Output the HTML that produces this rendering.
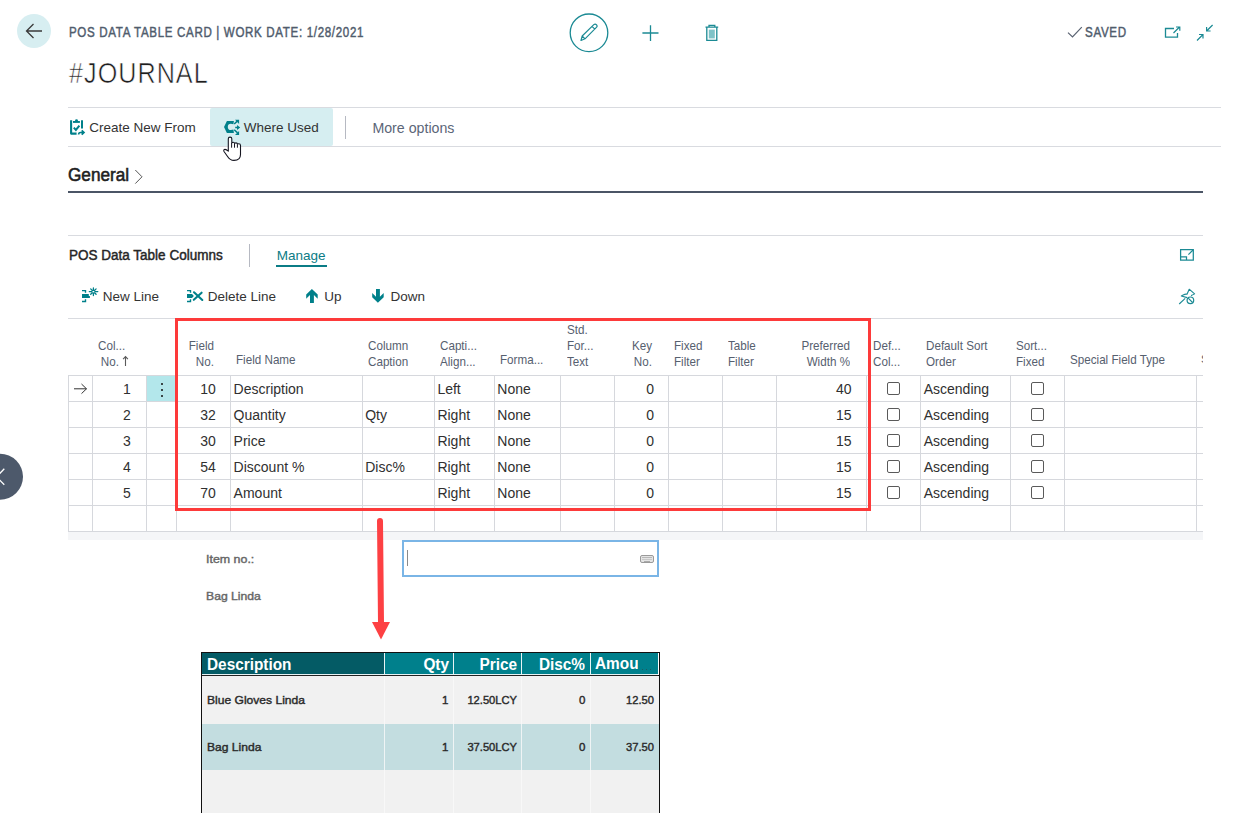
<!DOCTYPE html>
<html><head><meta charset="utf-8">
<style>
html,body{margin:0;padding:0;background:#fff;width:1234px;height:813px;overflow:hidden;position:relative;font-family:"Liberation Sans",sans-serif;}
.t{position:absolute;white-space:nowrap;}
.b{position:absolute;}
svg{position:absolute;overflow:visible;}
</style></head><body>

<div class="b" style="left:17px;top:14px;width:34px;height:34px;border-radius:50%;background:#d7eef1;"></div>
<svg style="left:0;top:0" width="1" height="1"><path d="M42 31 H27 M33.5 24 L26.5 31 L33.5 38" fill="none" stroke="#3a3a3a" stroke-width="1.3"/></svg>
<div class="t" style="left:68.80px;top:25.15px;font-size:14px;line-height:14px;color:#505c6d;font-weight:400;transform:scaleX(0.826);transform-origin:left center;letter-spacing:0.8px;-webkit-text-stroke:0.45px #505c6d;">POS DATA TABLE CARD | WORK DATE: 1/28/2021</div>
<div class="t" style="left:68.90px;top:58.41px;font-size:30px;line-height:30px;color:#1e1e1e;font-weight:400;transform:scaleX(0.84);transform-origin:left center;letter-spacing:1.2px;-webkit-text-stroke:0.6px #fff;">#JOURNAL</div>
<svg style="left:0;top:0" width="1" height="1"><circle cx="589" cy="32.8" r="18.8" fill="none" stroke="#1b8a94" stroke-width="1.3"/><path d="M581 40.5 L582.2 36 L593.8 24.6 Q595.2 23.4 596.6 24.8 Q597.8 26.2 596.4 27.4 L585 38.8 Z M582.2 36 L585 38.8 M592 26.4 L594.8 29.2" fill="none" stroke="#1b8a94" stroke-width="1.2" stroke-linejoin="round"/><path d="M642.4 33 H658.5 M650.5 25.2 V41" stroke="#1b8a94" stroke-width="1.3"/><path d="M705.5 27.2 H718.2 M709 27.2 V25.3 H714.8 V27.2 M706.8 27.2 V40.4 H716.8 V27.2" fill="none" stroke="#1b8a94" stroke-width="1.3"/><rect x="708.8" y="29.6" width="6" height="8.8" fill="#7fc3c8"/></svg>
<svg style="left:0;top:0" width="1" height="1"><path d="M1068 32.6 L1072.5 37 L1081.8 27.2" fill="none" stroke="#5a6372" stroke-width="1.2"/></svg>
<div class="t" style="left:1085.00px;top:25.15px;font-size:14px;line-height:14px;color:#505c6d;font-weight:400;transform:scaleX(0.829);transform-origin:left center;letter-spacing:0.8px;-webkit-text-stroke:0.45px #505c6d;">SAVED</div>
<svg style="left:0;top:0" width="1" height="1"><path d="M1174 28.5 H1165.5 V37.2 H1177.5 V33" fill="none" stroke="#1b8a94" stroke-width="1.3"/><path d="M1173.5 33 L1179.5 27 M1176 27 H1179.8 V30.8" fill="none" stroke="#1b8a94" stroke-width="1.2"/></svg>
<svg style="left:0;top:0" width="1" height="1"><path d="M1197 40.5 L1203 34.5 M1199 34.5 H1203 V38.5" fill="none" stroke="#1b8a94" stroke-width="1.2"/><path d="M1212.6 25 L1206.6 31 M1210.6 31 H1206.6 V27" fill="none" stroke="#1b8a94" stroke-width="1.2"/></svg>
<div class="b" style="left:68px;top:107px;width:1153px;height:1px;background:#d9dbe0;"></div>
<div class="b" style="left:68px;top:146px;width:1153px;height:1px;background:#d9dbe0;"></div>
<div class="b" style="left:210px;top:108px;width:123px;height:38px;background:#d6eef1;border-radius:2px;"></div>
<svg style="left:0;top:0" width="1" height="1"><path d="M71.1 120.2 V133.6 H76.6" fill="none" stroke="#00808a" stroke-width="2.1" stroke-linejoin="round"/><path d="M82 120.2 V128.6" fill="none" stroke="#00808a" stroke-width="2"/><rect x="73" y="121" width="6.9" height="1.9" fill="#00808a"/><circle cx="76.5" cy="120.6" r="1.4" fill="#00808a"/><path d="M73.8 127.6 L75.9 129.9 L79.4 125.6" fill="none" stroke="#00808a" stroke-width="2"/><path d="M78.6 134.6 Q78.6 132.5 80.6 132.5 H84.3 M81.7 130.3 L84 132.5 L81.7 134.7" fill="none" stroke="#00808a" stroke-width="1.7"/></svg>
<div class="t" style="left:89.20px;top:121.37px;font-size:13.5px;line-height:13.5px;color:#333333;font-weight:400;">Create New From</div>
<svg style="left:0;top:0" width="1" height="1"><path d="M224 126.9 L226.9 121 H233.9 L233.4 124.2 Q232.3 123.8 230.9 123.8 A3.1 3.1 0 0 0 230.9 130 Q232.3 130 233.4 129.6 L233.9 132.9 H226.9 Z" fill="#00808a"/><path d="M234.2 124 L237.6 120.9 M235.2 127.4 H238.2 M234.2 129.8 L237.6 132.9" fill="none" stroke="#00808a" stroke-width="1.5"/><path d="M235 119.8 H239.1 V123.9 Z M237 124.9 L240.2 127.4 L237 129.9 Z M235 135 H239.1 V130.9 Z" fill="#00808a"/></svg>
<div class="t" style="left:243.80px;top:121.37px;font-size:13.5px;line-height:13.5px;color:#333333;font-weight:400;">Where Used</div>
<div class="b" style="left:345px;top:116px;width:1px;height:23px;background:#b6b9c2;"></div>
<div class="t" style="left:372.40px;top:120.78px;font-size:14.2px;line-height:14.2px;color:#5b6678;font-weight:400;">More options</div>
<svg style="left:0;top:0" width="1" height="1"><path d="M228.3 151.2 V138.8 Q228.3 137.1 230.05 137.1 Q231.8 137.1 231.8 138.8 V142.9 Q232.4 142.3 233.2 142.3 Q234.5 142.3 234.6 143.4 Q235.3 142.9 236 142.9 Q237.3 142.9 237.5 144.1 Q238.1 143.8 238.8 143.8 Q240.5 143.8 240.5 145.6 V154.5 Q240.5 160.4 234 160.4 Q230 160.4 227.4 156.2 L224 151.5 Q223.3 150 224.3 149.5 Q225.8 148.8 228.3 151.2 Z" fill="#fff" stroke="#151520" stroke-width="1.1" stroke-linejoin="round"/><path d="M231.6 143 V147.7 M234.5 143.6 V147.7 M237.4 144.3 V147.7" fill="none" stroke="#151520" stroke-width="1"/></svg>
<div class="t" style="left:68.30px;top:166.46px;font-size:18px;line-height:18px;color:#212121;font-weight:400;transform:scaleX(0.955);transform-origin:left center;-webkit-text-stroke:0.55px #212121;">General</div>
<svg style="left:0;top:0" width="1" height="1"><path d="M135.3 170 L142 176.8 L135.3 183.6" fill="none" stroke="#555" stroke-width="1"/></svg>
<div class="b" style="left:68px;top:191px;width:1135px;height:2px;background:#4b5566;"></div>
<div class="b" style="left:68px;top:235px;width:1135px;height:1px;background:#d9dbe0;"></div>
<div class="t" style="left:68.60px;top:248.35px;font-size:14px;line-height:14px;color:#262626;font-weight:400;transform:scaleX(0.965);transform-origin:left center;-webkit-text-stroke:0.45px #262626;">POS Data Table Columns</div>
<div class="b" style="left:249px;top:244px;width:1px;height:23px;background:#b6b9c2;"></div>
<div class="t" style="left:276.70px;top:249.47px;font-size:13.5px;line-height:13.5px;color:#0b7c86;font-weight:400;">Manage</div>
<div class="b" style="left:276px;top:265px;width:51px;height:2px;background:#0b7c86;"></div>
<svg style="left:0;top:0" width="1" height="1"><path d="M1180.6 249.6 H1193.3 V260.2 H1180.6 Z M1180.6 256.9 H1186.5 V260.2" fill="none" stroke="#1b8a94" stroke-width="1.25"/><path d="M1188.4 254.6 L1193 250" fill="none" stroke="#1b8a94" stroke-width="1.2"/></svg>
<svg style="left:0;top:0" width="1" height="1"><path d="M82 290.6 H85.5 V292.8 M82 301.5 H85.5 V299.3" fill="none" stroke="#00808a" stroke-width="1.4"/><path d="M82 294 H88.8 V296 H89.9 V298 H82 Z" fill="#00808a"/><path d="M93.4 288 V290.4 M93.4 292.8 V295.6 M89.3 291.6 H91.9 M94.9 291.6 H97.8 M90.7 288.9 L92.3 290.5 M94.5 292.7 L96.1 294.3 M96.1 288.9 L94.5 290.5 M92.3 292.7 L90.7 294.3" stroke="#00808a" stroke-width="1.3" stroke-linecap="round"/><path d="M187 290.6 H190.5 V292.8 M187 301.5 H190.5 V299.3" fill="none" stroke="#00808a" stroke-width="1.4"/><path d="M187 294 H192 L193.9 296 L192 298 H187 Z" fill="#00808a"/><path d="M194 292.3 L202.3 300 M201.6 292.7 L193.8 299.8" stroke="#00808a" stroke-width="2.1" stroke-linecap="round"/><path d="M311.9 289 L317.7 294.5 V298.7 L313.9 295 V302.9 H310 V295 L306.2 298.7 V294.5 Z" fill="#00808a"/><path d="M377.9 302.8 L383.7 297.3 V293.1 L379.9 296.8 V289 H376 V296.8 L372.2 293.1 V297.3 Z" fill="#00808a"/></svg>
<div class="t" style="left:102.80px;top:290.47px;font-size:13.5px;line-height:13.5px;color:#333333;font-weight:400;">New Line</div>
<div class="t" style="left:207.80px;top:290.47px;font-size:13.5px;line-height:13.5px;color:#333333;font-weight:400;">Delete Line</div>
<div class="t" style="left:324.30px;top:290.47px;font-size:13.5px;line-height:13.5px;color:#333333;font-weight:400;">Up</div>
<div class="t" style="left:390.40px;top:290.47px;font-size:13.5px;line-height:13.5px;color:#333333;font-weight:400;">Down</div>
<svg style="left:0;top:0" width="1" height="1"><path d="M1179.2 304 L1185.2 298.3" fill="none" stroke="#1b8a94" stroke-width="1.1"/><path d="M1187.2 297.6 L1181.3 296 L1183.2 295 Q1185.5 293.8 1187 294.3 L1189.2 289.2 L1194.6 293.9 Q1192.5 295.2 1191 295.6" fill="none" stroke="#1b8a94" stroke-width="1.1" stroke-linejoin="round"/><circle cx="1190.4" cy="300.3" r="3.3" fill="#fff" stroke="#1b8a94" stroke-width="1.2"/><path d="M1188.2 298.1 L1192.6 302.5" stroke="#1b8a94" stroke-width="1.1"/></svg>
<div class="b" style="left:68px;top:318px;width:1135px;height:1px;background:#d9dbe0;"></div>
<div class="b" style="left:147px;top:376px;width:29px;height:25px;background:#b3e7eb;"></div>
<div class="b" style="left:68px;top:375px;width:1135px;height:1px;background:#d6d8dd;"></div>
<div class="b" style="left:68px;top:401px;width:1135px;height:1px;background:#d6d8dd;"></div>
<div class="b" style="left:68px;top:427px;width:1135px;height:1px;background:#d6d8dd;"></div>
<div class="b" style="left:68px;top:453px;width:1135px;height:1px;background:#d6d8dd;"></div>
<div class="b" style="left:68px;top:479px;width:1135px;height:1px;background:#d6d8dd;"></div>
<div class="b" style="left:68px;top:505px;width:1135px;height:1px;background:#d6d8dd;"></div>
<div class="b" style="left:68px;top:531px;width:1135px;height:1px;background:#d6d8dd;"></div>
<div class="b" style="left:68px;top:375px;width:1px;height:156px;background:#d6d8dd;"></div>
<div class="b" style="left:92px;top:375px;width:1px;height:156px;background:#d6d8dd;"></div>
<div class="b" style="left:146px;top:375px;width:1px;height:156px;background:#d6d8dd;"></div>
<div class="b" style="left:176px;top:375px;width:1px;height:156px;background:#d6d8dd;"></div>
<div class="b" style="left:230px;top:375px;width:1px;height:156px;background:#d6d8dd;"></div>
<div class="b" style="left:362px;top:375px;width:1px;height:156px;background:#d6d8dd;"></div>
<div class="b" style="left:434px;top:375px;width:1px;height:156px;background:#d6d8dd;"></div>
<div class="b" style="left:494px;top:375px;width:1px;height:156px;background:#d6d8dd;"></div>
<div class="b" style="left:560px;top:375px;width:1px;height:156px;background:#d6d8dd;"></div>
<div class="b" style="left:614px;top:375px;width:1px;height:156px;background:#d6d8dd;"></div>
<div class="b" style="left:668px;top:375px;width:1px;height:156px;background:#d6d8dd;"></div>
<div class="b" style="left:722px;top:375px;width:1px;height:156px;background:#d6d8dd;"></div>
<div class="b" style="left:776px;top:375px;width:1px;height:156px;background:#d6d8dd;"></div>
<div class="b" style="left:866px;top:375px;width:1px;height:156px;background:#d6d8dd;"></div>
<div class="b" style="left:920px;top:375px;width:1px;height:156px;background:#d6d8dd;"></div>
<div class="b" style="left:1010px;top:375px;width:1px;height:156px;background:#d6d8dd;"></div>
<div class="b" style="left:1064px;top:375px;width:1px;height:156px;background:#d6d8dd;"></div>
<div class="b" style="left:1196px;top:375px;width:1px;height:156px;background:#d6d8dd;"></div>
<div class="b" style="left:68px;top:532px;width:1135px;height:8px;background:#f5f6f8;"></div>
<div class="t" style="left:98.20px;top:340.16px;font-size:12.8px;line-height:12.8px;color:#56606f;font-weight:400;transform:scaleX(0.91);transform-origin:left center;">Col...</div>
<div class="t" style="left:-281.40px;width:400px;text-align:right;top:356.16px;font-size:12.8px;line-height:12.8px;color:#56606f;font-weight:400;transform:scaleX(0.91);transform-origin:right center;">No.</div>
<svg style="left:0;top:0" width="1" height="1"><path d="M125.5 356.4 V366 M123.1 359.2 L125.5 356.6 L127.9 359.2" fill="none" stroke="#5a5a5a" stroke-width="1.1"/></svg>
<div class="t" style="left:-186.20px;width:400px;text-align:right;top:340.16px;font-size:12.8px;line-height:12.8px;color:#56606f;font-weight:400;transform:scaleX(0.91);transform-origin:right center;">Field</div>
<div class="t" style="left:-186.20px;width:400px;text-align:right;top:356.16px;font-size:12.8px;line-height:12.8px;color:#56606f;font-weight:400;transform:scaleX(0.91);transform-origin:right center;">No.</div>
<div class="t" style="left:236.30px;top:353.76px;font-size:12.8px;line-height:12.8px;color:#56606f;font-weight:400;transform:scaleX(0.91);transform-origin:left center;">Field Name</div>
<div class="t" style="left:368.20px;top:340.16px;font-size:12.8px;line-height:12.8px;color:#56606f;font-weight:400;transform:scaleX(0.91);transform-origin:left center;">Column</div>
<div class="t" style="left:368.20px;top:356.16px;font-size:12.8px;line-height:12.8px;color:#56606f;font-weight:400;transform:scaleX(0.91);transform-origin:left center;">Caption</div>
<div class="t" style="left:440.10px;top:340.16px;font-size:12.8px;line-height:12.8px;color:#56606f;font-weight:400;transform:scaleX(0.91);transform-origin:left center;">Capti...</div>
<div class="t" style="left:440.10px;top:356.16px;font-size:12.8px;line-height:12.8px;color:#56606f;font-weight:400;transform:scaleX(0.91);transform-origin:left center;">Align...</div>
<div class="t" style="left:500.20px;top:353.76px;font-size:12.8px;line-height:12.8px;color:#56606f;font-weight:400;transform:scaleX(0.91);transform-origin:left center;">Forma...</div>
<div class="t" style="left:566.60px;top:324.16px;font-size:12.8px;line-height:12.8px;color:#56606f;font-weight:400;transform:scaleX(0.91);transform-origin:left center;">Std.</div>
<div class="t" style="left:566.60px;top:340.16px;font-size:12.8px;line-height:12.8px;color:#56606f;font-weight:400;transform:scaleX(0.91);transform-origin:left center;">For...</div>
<div class="t" style="left:566.60px;top:356.16px;font-size:12.8px;line-height:12.8px;color:#56606f;font-weight:400;transform:scaleX(0.91);transform-origin:left center;">Text</div>
<div class="t" style="left:251.70px;width:400px;text-align:right;top:340.16px;font-size:12.8px;line-height:12.8px;color:#56606f;font-weight:400;transform:scaleX(0.91);transform-origin:right center;">Key</div>
<div class="t" style="left:251.70px;width:400px;text-align:right;top:356.16px;font-size:12.8px;line-height:12.8px;color:#56606f;font-weight:400;transform:scaleX(0.91);transform-origin:right center;">No.</div>
<div class="t" style="left:674.30px;top:340.16px;font-size:12.8px;line-height:12.8px;color:#56606f;font-weight:400;transform:scaleX(0.91);transform-origin:left center;">Fixed</div>
<div class="t" style="left:674.30px;top:356.16px;font-size:12.8px;line-height:12.8px;color:#56606f;font-weight:400;transform:scaleX(0.91);transform-origin:left center;">Filter</div>
<div class="t" style="left:728.30px;top:340.16px;font-size:12.8px;line-height:12.8px;color:#56606f;font-weight:400;transform:scaleX(0.91);transform-origin:left center;">Table</div>
<div class="t" style="left:728.30px;top:356.16px;font-size:12.8px;line-height:12.8px;color:#56606f;font-weight:400;transform:scaleX(0.91);transform-origin:left center;">Filter</div>
<div class="t" style="left:449.70px;width:400px;text-align:right;top:340.16px;font-size:12.8px;line-height:12.8px;color:#56606f;font-weight:400;transform:scaleX(0.91);transform-origin:right center;">Preferred</div>
<div class="t" style="left:449.70px;width:400px;text-align:right;top:356.16px;font-size:12.8px;line-height:12.8px;color:#56606f;font-weight:400;transform:scaleX(0.91);transform-origin:right center;">Width %</div>
<div class="t" style="left:872.60px;top:340.16px;font-size:12.8px;line-height:12.8px;color:#56606f;font-weight:400;transform:scaleX(0.91);transform-origin:left center;">Def...</div>
<div class="t" style="left:872.60px;top:356.16px;font-size:12.8px;line-height:12.8px;color:#56606f;font-weight:400;transform:scaleX(0.91);transform-origin:left center;">Col...</div>
<div class="t" style="left:926.30px;top:340.16px;font-size:12.8px;line-height:12.8px;color:#56606f;font-weight:400;transform:scaleX(0.91);transform-origin:left center;">Default Sort</div>
<div class="t" style="left:926.30px;top:356.16px;font-size:12.8px;line-height:12.8px;color:#56606f;font-weight:400;transform:scaleX(0.91);transform-origin:left center;">Order</div>
<div class="t" style="left:1016.30px;top:340.16px;font-size:12.8px;line-height:12.8px;color:#56606f;font-weight:400;transform:scaleX(0.91);transform-origin:left center;">Sort...</div>
<div class="t" style="left:1016.30px;top:356.16px;font-size:12.8px;line-height:12.8px;color:#56606f;font-weight:400;transform:scaleX(0.91);transform-origin:left center;">Fixed</div>
<div class="t" style="left:1070.30px;top:353.76px;font-size:12.8px;line-height:12.8px;color:#56606f;font-weight:400;transform:scaleX(0.91);transform-origin:left center;">Special Field Type</div>
<div class="t" style="left:1201px;top:354.3px;width:2px;overflow:hidden;font-size:11.5px;line-height:11.5px;color:#56606f;">S</div>
<div class="t" style="left:-269.30px;width:400px;text-align:right;top:381.85px;font-size:14px;line-height:14px;color:#303030;font-weight:400;">1</div>
<div class="t" style="left:-184.20px;width:400px;text-align:right;top:381.85px;font-size:14px;line-height:14px;color:#303030;font-weight:400;">10</div>
<div class="t" style="left:233.60px;top:381.85px;font-size:14px;line-height:14px;color:#303030;font-weight:400;">Description</div>
<div class="t" style="left:437.40px;top:381.85px;font-size:14px;line-height:14px;color:#303030;font-weight:400;">Left</div>
<div class="t" style="left:497.30px;top:381.85px;font-size:14px;line-height:14px;color:#303030;font-weight:400;">None</div>
<div class="t" style="left:254.00px;width:400px;text-align:right;top:381.85px;font-size:14px;line-height:14px;color:#303030;font-weight:400;">0</div>
<div class="t" style="left:451.50px;width:400px;text-align:right;top:381.85px;font-size:14px;line-height:14px;color:#303030;font-weight:400;">40</div>
<div class="b" style="left:887px;top:381.6px;width:11px;height:11px;border:1px solid #5a5a5a;border-radius:2px;background:#fff;"></div>
<div class="t" style="left:923.70px;top:381.85px;font-size:14px;line-height:14px;color:#303030;font-weight:400;">Ascending</div>
<div class="b" style="left:1031px;top:381.6px;width:11px;height:11px;border:1px solid #5a5a5a;border-radius:2px;background:#fff;"></div>
<div class="t" style="left:-269.30px;width:400px;text-align:right;top:407.85px;font-size:14px;line-height:14px;color:#303030;font-weight:400;">2</div>
<div class="t" style="left:-184.20px;width:400px;text-align:right;top:407.85px;font-size:14px;line-height:14px;color:#303030;font-weight:400;">32</div>
<div class="t" style="left:233.60px;top:407.85px;font-size:14px;line-height:14px;color:#303030;font-weight:400;">Quantity</div>
<div class="t" style="left:365.20px;top:407.85px;font-size:14px;line-height:14px;color:#303030;font-weight:400;">Qty</div>
<div class="t" style="left:437.40px;top:407.85px;font-size:14px;line-height:14px;color:#303030;font-weight:400;">Right</div>
<div class="t" style="left:497.30px;top:407.85px;font-size:14px;line-height:14px;color:#303030;font-weight:400;">None</div>
<div class="t" style="left:254.00px;width:400px;text-align:right;top:407.85px;font-size:14px;line-height:14px;color:#303030;font-weight:400;">0</div>
<div class="t" style="left:451.50px;width:400px;text-align:right;top:407.85px;font-size:14px;line-height:14px;color:#303030;font-weight:400;">15</div>
<div class="b" style="left:887px;top:407.6px;width:11px;height:11px;border:1px solid #5a5a5a;border-radius:2px;background:#fff;"></div>
<div class="t" style="left:923.70px;top:407.85px;font-size:14px;line-height:14px;color:#303030;font-weight:400;">Ascending</div>
<div class="b" style="left:1031px;top:407.6px;width:11px;height:11px;border:1px solid #5a5a5a;border-radius:2px;background:#fff;"></div>
<div class="t" style="left:-269.30px;width:400px;text-align:right;top:433.85px;font-size:14px;line-height:14px;color:#303030;font-weight:400;">3</div>
<div class="t" style="left:-184.20px;width:400px;text-align:right;top:433.85px;font-size:14px;line-height:14px;color:#303030;font-weight:400;">30</div>
<div class="t" style="left:233.60px;top:433.85px;font-size:14px;line-height:14px;color:#303030;font-weight:400;">Price</div>
<div class="t" style="left:437.40px;top:433.85px;font-size:14px;line-height:14px;color:#303030;font-weight:400;">Right</div>
<div class="t" style="left:497.30px;top:433.85px;font-size:14px;line-height:14px;color:#303030;font-weight:400;">None</div>
<div class="t" style="left:254.00px;width:400px;text-align:right;top:433.85px;font-size:14px;line-height:14px;color:#303030;font-weight:400;">0</div>
<div class="t" style="left:451.50px;width:400px;text-align:right;top:433.85px;font-size:14px;line-height:14px;color:#303030;font-weight:400;">15</div>
<div class="b" style="left:887px;top:433.6px;width:11px;height:11px;border:1px solid #5a5a5a;border-radius:2px;background:#fff;"></div>
<div class="t" style="left:923.70px;top:433.85px;font-size:14px;line-height:14px;color:#303030;font-weight:400;">Ascending</div>
<div class="b" style="left:1031px;top:433.6px;width:11px;height:11px;border:1px solid #5a5a5a;border-radius:2px;background:#fff;"></div>
<div class="t" style="left:-269.30px;width:400px;text-align:right;top:459.85px;font-size:14px;line-height:14px;color:#303030;font-weight:400;">4</div>
<div class="t" style="left:-184.20px;width:400px;text-align:right;top:459.85px;font-size:14px;line-height:14px;color:#303030;font-weight:400;">54</div>
<div class="t" style="left:233.60px;top:459.85px;font-size:14px;line-height:14px;color:#303030;font-weight:400;">Discount %</div>
<div class="t" style="left:365.20px;top:459.85px;font-size:14px;line-height:14px;color:#303030;font-weight:400;">Disc%</div>
<div class="t" style="left:437.40px;top:459.85px;font-size:14px;line-height:14px;color:#303030;font-weight:400;">Right</div>
<div class="t" style="left:497.30px;top:459.85px;font-size:14px;line-height:14px;color:#303030;font-weight:400;">None</div>
<div class="t" style="left:254.00px;width:400px;text-align:right;top:459.85px;font-size:14px;line-height:14px;color:#303030;font-weight:400;">0</div>
<div class="t" style="left:451.50px;width:400px;text-align:right;top:459.85px;font-size:14px;line-height:14px;color:#303030;font-weight:400;">15</div>
<div class="b" style="left:887px;top:459.6px;width:11px;height:11px;border:1px solid #5a5a5a;border-radius:2px;background:#fff;"></div>
<div class="t" style="left:923.70px;top:459.85px;font-size:14px;line-height:14px;color:#303030;font-weight:400;">Ascending</div>
<div class="b" style="left:1031px;top:459.6px;width:11px;height:11px;border:1px solid #5a5a5a;border-radius:2px;background:#fff;"></div>
<div class="t" style="left:-269.30px;width:400px;text-align:right;top:485.85px;font-size:14px;line-height:14px;color:#303030;font-weight:400;">5</div>
<div class="t" style="left:-184.20px;width:400px;text-align:right;top:485.85px;font-size:14px;line-height:14px;color:#303030;font-weight:400;">70</div>
<div class="t" style="left:233.60px;top:485.85px;font-size:14px;line-height:14px;color:#303030;font-weight:400;">Amount</div>
<div class="t" style="left:437.40px;top:485.85px;font-size:14px;line-height:14px;color:#303030;font-weight:400;">Right</div>
<div class="t" style="left:497.30px;top:485.85px;font-size:14px;line-height:14px;color:#303030;font-weight:400;">None</div>
<div class="t" style="left:254.00px;width:400px;text-align:right;top:485.85px;font-size:14px;line-height:14px;color:#303030;font-weight:400;">0</div>
<div class="t" style="left:451.50px;width:400px;text-align:right;top:485.85px;font-size:14px;line-height:14px;color:#303030;font-weight:400;">15</div>
<div class="b" style="left:887px;top:485.6px;width:11px;height:11px;border:1px solid #5a5a5a;border-radius:2px;background:#fff;"></div>
<div class="t" style="left:923.70px;top:485.85px;font-size:14px;line-height:14px;color:#303030;font-weight:400;">Ascending</div>
<div class="b" style="left:1031px;top:485.6px;width:11px;height:11px;border:1px solid #5a5a5a;border-radius:2px;background:#fff;"></div>
<svg style="left:0;top:0" width="1" height="1"><path d="M74 388.8 H86.5 M81.5 384 L86.5 388.8 L81.5 393.6" fill="none" stroke="#333" stroke-width="1"/></svg>
<div class="b" style="left:160.5px;top:383px;width:2px;height:2px;background:#111;border-radius:1px;"></div>
<div class="b" style="left:160.5px;top:389px;width:2px;height:2px;background:#111;border-radius:1px;"></div>
<div class="b" style="left:160.5px;top:395px;width:2px;height:2px;background:#111;border-radius:1px;"></div>
<div class="b" style="left:175px;top:318px;width:690px;height:187px;border:3px solid #fd3a3a;"></div>
<div class="t" style="left:205.80px;top:554.27px;font-size:11.5px;line-height:11.5px;color:#666;font-weight:400;transform:scaleX(1.08);transform-origin:left center;-webkit-text-stroke:0.4px #666;">Item no.:</div>
<div class="t" style="left:205.80px;top:591.27px;font-size:11.5px;line-height:11.5px;color:#666;font-weight:400;transform:scaleX(1.06);transform-origin:left center;-webkit-text-stroke:0.4px #666;">Bag Linda</div>
<div class="b" style="left:402px;top:540px;width:253px;height:33px;border:2px solid #7ab5e6;background:#fff;"></div>
<div class="b" style="left:407px;top:550px;width:1px;height:16px;background:#8a8a8a;"></div>
<div class="b" style="left:640px;top:555px;width:14px;height:8px;background:#e4e4e4;border:1px solid #9a9a9a;border-radius:2px;box-sizing:border-box;"></div>
<div class="b" style="left:642px;top:557px;width:10px;height:1px;background:#b8b8b8;"></div>
<div class="b" style="left:642px;top:559px;width:10px;height:1px;background:#c8c8c8;"></div>
<div class="b" style="left:644px;top:561px;width:6px;height:1px;background:#aaaaaa;"></div>
<svg style="left:0;top:0" width="1" height="1"><path d="M380 521 L381 623" stroke="#fd4043" stroke-width="6" stroke-linecap="round"/><path d="M372 622 H390 L381 639.5 Z" fill="#fd4043"/></svg>
<div class="b" style="left:201px;top:652px;width:459px;height:170px;background:#111;"></div>
<div class="b" style="left:658px;top:653px;width:1px;height:22px;background:#fff;"></div>
<div class="b" style="left:202px;top:653px;width:182px;height:22px;background:#045b65;"></div>
<div class="b" style="left:385px;top:653px;width:68px;height:22px;background:#00808c;"></div>
<div class="b" style="left:454px;top:653px;width:67px;height:22px;background:#00808c;"></div>
<div class="b" style="left:522px;top:653px;width:68px;height:22px;background:#00808c;"></div>
<div class="b" style="left:591px;top:653px;width:67px;height:22px;background:#00808c;"></div>
<div class="b" style="left:202px;top:674px;width:456px;height:1px;background:#e6f3f4;"></div>
<div class="b" style="left:202px;top:675px;width:456px;height:1px;background:#222;"></div>
<div class="b" style="left:202px;top:676px;width:457px;height:48px;background:#f1f1f1;"></div>
<div class="b" style="left:202px;top:724px;width:457px;height:46px;background:#c3dde0;"></div>
<div class="b" style="left:202px;top:770px;width:457px;height:60px;background:#f1f1f1;"></div>
<div class="b" style="left:384px;top:676px;width:1px;height:150px;background:#fafafa;opacity:0.8;"></div>
<div class="b" style="left:384px;top:653px;width:1px;height:22px;background:#e8f4f5;"></div>
<div class="b" style="left:453px;top:676px;width:1px;height:150px;background:#fafafa;opacity:0.8;"></div>
<div class="b" style="left:453px;top:653px;width:1px;height:22px;background:#e8f4f5;"></div>
<div class="b" style="left:521px;top:676px;width:1px;height:150px;background:#fafafa;opacity:0.8;"></div>
<div class="b" style="left:521px;top:653px;width:1px;height:22px;background:#e8f4f5;"></div>
<div class="b" style="left:590px;top:676px;width:1px;height:150px;background:#fafafa;opacity:0.8;"></div>
<div class="b" style="left:590px;top:653px;width:1px;height:22px;background:#e8f4f5;"></div>
<div class="t" style="left:206.60px;top:656.86px;font-size:16px;line-height:16px;color:#fff;font-weight:700;transform:scaleX(0.96);transform-origin:left center;">Description</div>
<div class="t" style="left:48.50px;width:400px;text-align:right;top:656.86px;font-size:16px;line-height:16px;color:#fff;font-weight:700;transform:scaleX(0.96);transform-origin:right center;">Qty</div>
<div class="t" style="left:116.60px;width:400px;text-align:right;top:656.86px;font-size:16px;line-height:16px;color:#fff;font-weight:700;transform:scaleX(0.96);transform-origin:right center;">Price</div>
<div class="t" style="left:184.70px;width:400px;text-align:right;top:656.86px;font-size:16px;line-height:16px;color:#fff;font-weight:700;transform:scaleX(0.96);transform-origin:right center;">Disc%</div>
<div class="t" style="left:594.6px;top:656.46px;width:45px;overflow:hidden;font-size:16px;line-height:16px;color:#fff;font-weight:700;transform:scaleX(0.96);transform-origin:left center;">Amount</div>
<div class="b" style="left:641.5px;top:669px;width:1.3px;height:1.3px;background:#1d5a60;"></div>
<div class="b" style="left:645.5px;top:669px;width:1.3px;height:1.3px;background:#1d5a60;"></div>
<div class="b" style="left:649.5px;top:669px;width:1.3px;height:1.3px;background:#1d5a60;"></div>
<div class="t" style="left:206.60px;top:695.27px;font-size:11.5px;line-height:11.5px;color:#2a2a2a;font-weight:400;transform:scaleX(1.05);transform-origin:left center;-webkit-text-stroke:0.4px #2a2a2a;">Blue Gloves Linda</div>
<div class="t" style="left:48.50px;width:400px;text-align:right;top:695.27px;font-size:11.5px;line-height:11.5px;color:#2a2a2a;font-weight:400;-webkit-text-stroke:0.4px #2a2a2a;">1</div>
<div class="t" style="left:116.60px;width:400px;text-align:right;top:695.27px;font-size:11.5px;line-height:11.5px;color:#2a2a2a;font-weight:400;transform:scaleX(0.97);transform-origin:right center;-webkit-text-stroke:0.4px #2a2a2a;">12.50LCY</div>
<div class="t" style="left:185.30px;width:400px;text-align:right;top:695.27px;font-size:11.5px;line-height:11.5px;color:#2a2a2a;font-weight:400;-webkit-text-stroke:0.4px #2a2a2a;">0</div>
<div class="t" style="left:253.80px;width:400px;text-align:right;top:695.27px;font-size:11.5px;line-height:11.5px;color:#2a2a2a;font-weight:400;transform:scaleX(0.97);transform-origin:right center;-webkit-text-stroke:0.4px #2a2a2a;">12.50</div>
<div class="t" style="left:206.60px;top:741.97px;font-size:11.5px;line-height:11.5px;color:#2a2a2a;font-weight:400;transform:scaleX(1.05);transform-origin:left center;-webkit-text-stroke:0.4px #2a2a2a;">Bag Linda</div>
<div class="t" style="left:48.50px;width:400px;text-align:right;top:741.97px;font-size:11.5px;line-height:11.5px;color:#2a2a2a;font-weight:400;-webkit-text-stroke:0.4px #2a2a2a;">1</div>
<div class="t" style="left:116.60px;width:400px;text-align:right;top:741.97px;font-size:11.5px;line-height:11.5px;color:#2a2a2a;font-weight:400;transform:scaleX(0.97);transform-origin:right center;-webkit-text-stroke:0.4px #2a2a2a;">37.50LCY</div>
<div class="t" style="left:185.30px;width:400px;text-align:right;top:741.97px;font-size:11.5px;line-height:11.5px;color:#2a2a2a;font-weight:400;-webkit-text-stroke:0.4px #2a2a2a;">0</div>
<div class="t" style="left:253.80px;width:400px;text-align:right;top:741.97px;font-size:11.5px;line-height:11.5px;color:#2a2a2a;font-weight:400;transform:scaleX(0.97);transform-origin:right center;-webkit-text-stroke:0.4px #2a2a2a;">37.50</div>
<svg style="left:0;top:0" width="1" height="1"><circle cx="0" cy="476.8" r="23" fill="#4d596b"/><path d="M4.3 468.8 L-3.5 476.8 L4.3 484.7" fill="none" stroke="#fff" stroke-width="1.3"/></svg>
</body></html>
